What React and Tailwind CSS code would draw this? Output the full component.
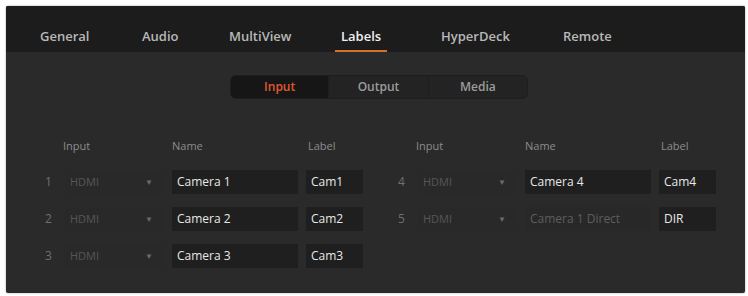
import React from "react";

const tabs = [
  { name: "General", w: "w-[102px]" },
  { name: "Audio", w: "w-[87px]" },
  { name: "MultiView", w: "w-[112px]" },
  { name: "Labels", w: "w-[100px]", active: true },
  { name: "HyperDeck", w: "w-[122px]" },
  { name: "Remote", w: "w-[80px]" },
];

const left = [
  { n: "1", name: "Camera 1", label: "Cam1" },
  { n: "2", name: "Camera 2", label: "Cam2" },
  { n: "3", name: "Camera 3", label: "Cam3" },
];

const right = [
  { n: "4", name: "Camera 4", label: "Cam4" },
  { n: "5", name: "Camera 1 Direct", label: "DIR", dim: true },
];

function Row({ n, name, label, dim }) {
  return (
    <div className="flex items-center h-[24px]">
      <div className="w-[22px] pl-[2px] text-[12px] text-[#6f6f6f]">{n}</div>
      <div className="w-[100px] h-full flex items-center justify-between pl-[5px] pr-[12px] bg-[#292929]">
        <span className="text-[11px] text-[#565656]">HDMI</span>
        <span className="text-[8px] text-[#6a6a6a]">▼</span>
      </div>
      <div
        className={
          "ml-[7px] w-[126px] h-full flex items-center pl-[5px] text-[12px] font-medium " +
          (dim ? "bg-[#282828] text-[#5e5e5e] font-normal" : "bg-[#1f1f1f] text-[#e8e8e8]")
        }
      >
        {name}
      </div>
      <div className="ml-[8px] w-[57px] h-full flex items-center pl-[5px] bg-[#1f1f1f] text-[12px] font-medium text-[#e8e8e8]">
        {label}
      </div>
    </div>
  );
}

function Block({ rows }) {
  return (
    <div className="flex flex-col">
      <div className="flex items-center h-[18px] text-[11px] text-[#8c8c8c]">
        <div className="w-[20px]" />
        <div className="w-[109px]">Input</div>
        <div className="w-[136px]">Name</div>
        <div>Label</div>
      </div>
      <div className="flex flex-col gap-[13px] mt-[15px]">
        {rows.map((r) => (
          <Row key={r.n} {...r} />
        ))}
      </div>
    </div>
  );
}

export default function App() {
  return (
    <div
      className="w-[748px] h-[296px] bg-white pt-[6px] pl-[6px]"
      style={{ fontFamily: '"Open Sans", "Noto Sans", sans-serif' }}
    >
      <div className="w-[739px] h-[287px] bg-[#2a2a2a] rounded-[2px] shadow-[0_0_2px_rgba(0,0,0,0.4)] overflow-hidden">
        <div className="h-[46px] bg-[#1c1c1c] flex pl-[28px]">
          {tabs.map((t) => (
            <div key={t.name} className={t.w + " h-full"}>
              <div
                className={
                  "inline-flex h-full px-[6px] pt-[22px] text-[13px] font-semibold leading-[16px] border-b-2 " +
                  (t.active ? "text-[#f0f0f0] border-[#d2702c]" : "text-[#b8b8b8] border-transparent")
                }
              >
                {t.name}
              </div>
            </div>
          ))}
        </div>
        <div className="mt-[23px] ml-[224px] w-[298px] h-[24px] flex rounded-[6px] overflow-hidden bg-[#232323] border border-[#1e1e1e] text-[12px] font-semibold">
          <div className="w-[98px] flex items-center justify-center bg-[#161616] text-[#e2582e]">Input</div>
          <div className="w-[100px] flex items-center justify-center text-[#9c9c9c] border-l border-[#1e1e1e]">Output</div>
          <div className="w-[100px] flex items-center justify-center text-[#9c9c9c] border-l border-[#1e1e1e]">Media</div>
        </div>
        <div className="flex mt-[38px] pl-[37px] gap-[33px]">
          <Block rows={left} />
          <Block rows={right} />
        </div>
      </div>
    </div>
  );
}
